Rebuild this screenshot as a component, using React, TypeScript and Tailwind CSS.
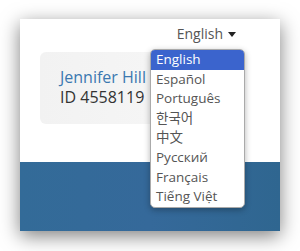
const languages = ['English', 'Español', 'Português', '한국어', '中文', 'Русский', 'Français', 'Tiếng Việt']

export default function App() {
  const selected = 'English'

  return (
    <div
      className="w-[300px] h-[251px] bg-white pt-[19px] pl-[20px]"
      style={{ fontFamily: '"Open Sans", "Noto Sans CJK KR", "Noto Sans CJK SC", sans-serif' }}
    >
      <div className="w-[260px] h-[212px] flex flex-col shadow-[0_5px_18px_rgba(0,0,0,0.5)]">
        {/* top area */}
        <div className="relative h-[143px] bg-white">
          <div className="flex justify-end items-center gap-[5px] pr-[44px] pt-[5px] text-[14px] leading-[20px] text-[#555]">
            <span>English</span>
            <svg width="8" height="5" viewBox="0 0 8 5">
              <path d="M0 0h8L4 5z" fill="#222" />
            </svg>
          </div>

          {/* account box */}
          <div className="mt-[8px] ml-[20px] w-[180px] h-[72px] rounded-[6px] bg-gradient-to-r from-[#f2f2f2] to-[#f7f7f7] pt-[15px] pl-[20px] text-[16px] leading-[20px]">
            <div className="text-[#3b78b0]">Jennifer Hill</div>
            <div className="text-[#333]">ID 4558119</div>
          </div>

          {/* language menu */}
          <ul className="absolute left-[130px] top-[30px] w-[95px] z-10 bg-white border border-[#aaa] rounded-[5px] overflow-hidden shadow-[0_2px_6px_rgba(0,0,0,0.3)] text-[13.5px] leading-[19.6px]">
            {languages.map((lang) => (
              <li
                key={lang}
                className={
                  lang === selected
                    ? 'pl-[5px] bg-[#3b64cd] text-white'
                    : 'pl-[5px] text-[#555]'
                }
              >
                {lang}
              </li>
            ))}
          </ul>
        </div>

        {/* blue band */}
        <div className="flex-1 bg-gradient-to-r from-[#336b98] via-[#35699a] to-[#2f6690]" />
      </div>
    </div>
  )
}
